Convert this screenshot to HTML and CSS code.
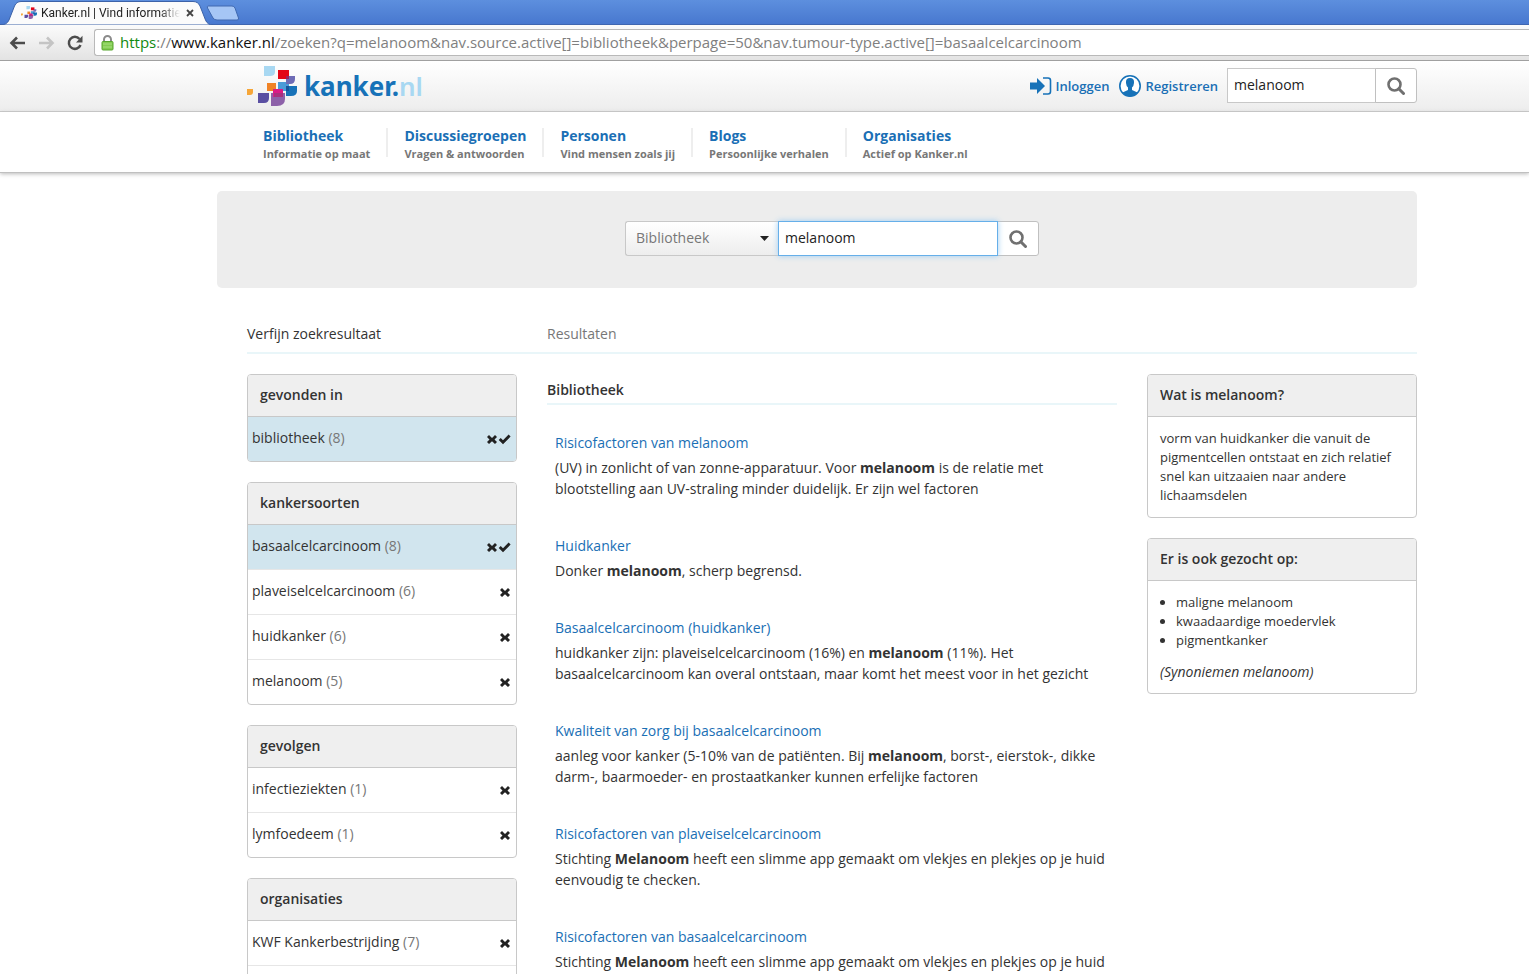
FILE: index.html
```html
<!DOCTYPE html>
<html lang="nl">
<head>
<meta charset="utf-8">
<title>Kanker.nl | Vind informatie</title>
<link rel="stylesheet" href="styles.css">
</head>
<body>
<svg class="defs" aria-hidden="true">
  <symbol id="cross" viewBox="0 0 12 12"><path d="M3 2L6 5L9 2L11 4L8.500 6.500L11 9L9 11L6 8.200L3 11L1 9L3.500 6.500L1 4Z"/></symbol>
  <symbol id="check" viewBox="0 0 13 12"><path d="M2.700 5L5 7.300L10.600 1.600L12.600 3.600L5 11.200L.7 7Z"/></symbol>
  <symbol id="search" viewBox="0 0 18 18"><circle cx="7.500" cy="7.500" r="6" fill="none" stroke="#707070" stroke-width="2.600"/><path d="M11.800 11.800L16.500 16.500" stroke="#707070" stroke-width="3" stroke-linecap="round"/></symbol>
  <symbol id="blocks" viewBox="0 0 50 40">
    <path fill="#a8d8f2" d="M17 0H28V6Q28 10 23 10H17Z"/>
    <path fill="#e30617" d="M31 4H42V13H31Z"/>
    <path fill="#f08326" d="M20 17H29V25H20Z"/>
    <path fill="#f6a638" d="M0 23H6V26Q6 29 3 29H0Z"/>
    <path fill="#5a4fa2" d="M11 27H22V32Q22 37 17 37H11Z"/>
    <path fill="#4a9bd8" d="M31 16H42V25H31Z"/>
    <path fill="#1772b8" d="M39 20H50V25Q50 30 44 30H39Z"/>
    <path fill="#6e6bb5" d="M42 10H48V13Q48 18 43 18H39V13H42Z"/>
    <path fill="#9a245f" d="M39 10H42V13H39Z"/>
    <path fill="#8d61a9" d="M24 27H38V33Q38 40 30 40H24Z"/>
    <path fill="#d91b86" d="M26 23H36V31H26Z"/>
    <path fill="#a9307e" d="M27 27H36V31H27Z"/>
    <path fill="#16559b" d="M39 20H42V25H39Z"/>
  </symbol>
</svg>

<div class="browser">
  <div class="tabs">
    <svg class="tab-shape" viewBox="0 0 245 25">
      <path d="M0 25Q7 25 9 20L14.500 6Q16.500 1.500 21 1.500H193Q198 1.500 200 6L205.500 20Q207.500 25 213 25Z" fill="#fbfbfb" stroke="#3c62a8"/>
      <path d="M208 6H232Q234 6 235 8L238.500 18Q239 20 237 20H217Q214.500 20 213 18L207.500 8Q207 6 208 6Z" fill="#a6c6f5" stroke="#4069b0"/>
    </svg>
    <div class="tab">
      <svg class="favicon"><use href="#blocks"/></svg>
      <span class="tab-title">Kanker.nl | Vind informatie</span>
      <button class="tab-close" aria-label="Sluiten"><svg width="8" height="8" viewBox="0 0 8 8"><path d="M1 1L7 7M7 1L1 7" stroke="#444" stroke-width="1.800"/></svg></button>
    </div>
  </div>
  <div class="toolbar">
    <button aria-label="Terug"><svg width="17" height="16" viewBox="0 0 17 16"><path d="M16 8H3M8 2.500L2.500 8L8 13.500" fill="none" stroke="#4c4c4c" stroke-width="2.600"/></svg></button>
    <button aria-label="Vooruit"><svg width="17" height="16" viewBox="0 0 17 16"><path d="M1 8H14M9 2.500L14.500 8L9 13.500" fill="none" stroke="#c4c4c4" stroke-width="2.600"/></svg></button>
    <button aria-label="Vernieuwen"><svg width="17" height="16" viewBox="0 0 17 16"><path d="M12.500 4A6 6 0 1 0 13.500 10" fill="none" stroke="#4c4c4c" stroke-width="2.500"/><path d="M15.500 .8V7.500H9Z" fill="#4c4c4c"/></svg></button>
    <div class="address">
      <svg width="13" height="16" viewBox="0 0 13 16"><path d="M3 7V4.500A3.500 3.500 0 0 1 10 4.500V7" fill="none" stroke="#8b8b8b" stroke-width="2"/><rect x="1" y="6.500" width="11" height="8.500" rx="1" fill="#83cc52" stroke="#57a52e"/><path d="M2 9H11M2 12H11" stroke="#a7df80"/></svg>
      <span class="url"><span class="scheme">https</span>://<span class="host">www.kanker.nl</span>/zoeken?q=melanoom&amp;nav.source.active[]=bibliotheek&amp;perpage=50&amp;nav.tumour-type.active[]=basaalcelcarcinoom</span>
    </div>
  </div>
</div>

<header class="site-header">
  <a class="logo" href="#"><svg class="logo-mark"><use href="#blocks"/></svg><span class="logo-name">kanker.<span class="logo-tld">nl</span></span></a>
  <div class="account">
    <a href="#"><svg width="22" height="18" viewBox="0 0 22 18"><path d="M0 5.500H7V1L15 9L7 17V12.500H0Z" fill="#1772b8"/><path d="M13 1H18Q20.500 1 20.500 3.500V14.500Q20.500 17 18 17H13" fill="none" stroke="#1772b8" stroke-width="1.600"/></svg>Inloggen</a>
    <a href="#"><svg width="24" height="24" viewBox="0 0 24 24"><circle cx="12" cy="12" r="10.200" fill="#fff" stroke="#1772b8" stroke-width="1.600"/><path d="M12 4Q16.500 4 16 9Q15.800 12 14 13.500V16L19.500 18.500Q16 22.500 12 22.500T4.500 18.500L10 16V13.500Q8.200 12 8 9Q7.500 4 12 4Z" fill="#1772b8"/></svg>Registreren</a>
  </div>
  <form class="search">
    <input class="top-input" type="text" value="melanoom" aria-label="Zoeken">
    <button class="search-btn" type="button" aria-label="Zoek"><svg width="18" height="18"><use href="#search"/></svg></button>
  </form>
</header>

<nav class="main-nav">
  <a href="#"><strong>Bibliotheek</strong><span>Informatie op maat</span></a>
  <a href="#"><strong>Discussiegroepen</strong><span>Vragen &amp; antwoorden</span></a>
  <a href="#"><strong>Personen</strong><span>Vind mensen zoals jij</span></a>
  <a href="#"><strong>Blogs</strong><span>Persoonlijke verhalen</span></a>
  <a href="#"><strong>Organisaties</strong><span>Actief op Kanker.nl</span></a>
</nav>

<main>
  <form class="hero search">
    <select aria-label="Bron"><option>Bibliotheek</option></select>
    <input class="hero-input" type="text" value="melanoom" aria-label="Zoekterm">
    <button class="search-btn" type="button" aria-label="Zoek"><svg width="18" height="18"><use href="#search"/></svg></button>
  </form>

  <div class="content">
    <div class="headings"><h2>Verfijn zoekresultaat</h2><h2 class="muted">Resultaten</h2></div>

    <div class="columns">
      <aside class="stack">
        <section class="panel">
          <h3>gevonden in</h3>
          <ul class="facets">
            <li class="active"><a href="#">bibliotheek <span>(8)</span></a><svg class="icon"><use href="#cross"/></svg><svg class="icon tick"><use href="#check"/></svg></li>
          </ul>
        </section>
        <section class="panel">
          <h3>kankersoorten</h3>
          <ul class="facets">
            <li class="active"><a href="#">basaalcelcarcinoom <span>(8)</span></a><svg class="icon"><use href="#cross"/></svg><svg class="icon tick"><use href="#check"/></svg></li>
            <li><a href="#">plaveiselcelcarcinoom <span>(6)</span></a><svg class="icon"><use href="#cross"/></svg></li>
            <li><a href="#">huidkanker <span>(6)</span></a><svg class="icon"><use href="#cross"/></svg></li>
            <li><a href="#">melanoom <span>(5)</span></a><svg class="icon"><use href="#cross"/></svg></li>
          </ul>
        </section>
        <section class="panel">
          <h3>gevolgen</h3>
          <ul class="facets">
            <li><a href="#">infectieziekten <span>(1)</span></a><svg class="icon"><use href="#cross"/></svg></li>
            <li><a href="#">lymfoedeem <span>(1)</span></a><svg class="icon"><use href="#cross"/></svg></li>
          </ul>
        </section>
        <section class="panel">
          <h3>organisaties</h3>
          <ul class="facets">
            <li><a href="#">KWF Kankerbestrijding <span>(7)</span></a><svg class="icon"><use href="#cross"/></svg></li>
            <li></li>
          </ul>
        </section>
      </aside>

      <section class="results">
        <h3>Bibliotheek</h3>
        <article><a href="#">Risicofactoren van melanoom</a><p>(UV) in zonlicht of van zonne-apparatuur. Voor <b>melanoom</b> is de relatie met blootstelling aan UV-straling minder duidelijk. Er zijn wel factoren</p></article>
        <article><a href="#">Huidkanker</a><p>Donker <b>melanoom</b>, scherp begrensd.</p></article>
        <article><a href="#">Basaalcelcarcinoom (huidkanker)</a><p>huidkanker zijn: plaveiselcelcarcinoom (16%) en <b>melanoom</b> (11%). Het basaalcelcarcinoom kan overal ontstaan, maar komt het meest voor in het gezicht</p></article>
        <article><a href="#">Kwaliteit van zorg bij basaalcelcarcinoom</a><p>aanleg voor kanker (5-10% van de patiënten. Bij <b>melanoom</b>, borst-, eierstok-, dikke darm-, baarmoeder- en prostaatkanker kunnen erfelijke factoren</p></article>
        <article><a href="#">Risicofactoren van plaveiselcelcarcinoom</a><p>Stichting <b>Melanoom</b> heeft een slimme app gemaakt om vlekjes en plekjes op je huid eenvoudig te checken.</p></article>
        <article><a href="#">Risicofactoren van basaalcelcarcinoom</a><p>Stichting <b>Melanoom</b> heeft een slimme app gemaakt om vlekjes en plekjes op je huid</p></article>
      </section>

      <aside class="stack">
        <section class="panel">
          <h3>Wat is melanoom?</h3>
          <div class="panel-text"><p>vorm van huidkanker die vanuit de pigmentcellen ontstaat en zich relatief snel kan uitzaaien naar andere lichaamsdelen</p></div>
        </section>
        <section class="panel">
          <h3>Er is ook gezocht op:</h3>
          <div class="panel-text">
            <ul><li>maligne melanoom</li><li>kwaadaardige moedervlek</li><li>pigmentkanker</li></ul>
            <p class="note">(Synoniemen melanoom)</p>
          </div>
        </section>
      </aside>
    </div>
  </div>
</main>
</body>
</html>
```

FILE: styles.css
```css
* { box-sizing: border-box; }
body {
  margin: 0;
  height: 100vh;
  overflow: hidden;
  display: flex;
  flex-direction: column;
  background: #fff;
  color: #333;
  font: 14px/21px "Open Sans", sans-serif;
}
h2, h3, p, ul { margin: 0; padding: 0; }
a { color: #1a6fb5; text-decoration: none; }
button { border: 0; padding: 0; background: none; display: flex; align-items: center; justify-content: center; }
svg { flex: none; }
.defs { position: absolute; width: 0; height: 0; }

.browser { flex: none; }
.tabs { position: relative; height: 25px; background: linear-gradient(#5d8fde, #4878cf); border-bottom: 1px solid #3f66b0; }
.tab-shape { position: absolute; left: 0; top: 0; width: 245px; height: 25px; }
.tab { position: relative; display: flex; align-items: center; width: 196px; height: 25px; padding-left: 21px; }
.favicon { width: 16px; height: 13px; margin-right: 4px; }
.tab-title {
  width: 139px;
  margin-right: 6px;
  overflow: hidden;
  white-space: nowrap;
  font: 12px/18px Roboto, sans-serif;
  color: #222;
  -webkit-mask-image: linear-gradient(90deg, #000 85%, transparent);
  mask-image: linear-gradient(90deg, #000 85%, transparent);
}
.toolbar { display: flex; align-items: center; gap: 12px; height: 36px; padding: 0 0 0 9px; background: linear-gradient(#fbfbfb, #e3e3e3); border-bottom: 1px solid #a0a0a0; }
.address { flex: 1; display: flex; align-items: center; gap: 6px; height: 27px; margin-left: -2px; padding-left: 6px; background: #fff; border: 1px solid #b9b9b9; border-right: 0; border-radius: 3px 0 0 3px; }
.url { padding-bottom: 2px; font: 15px/20px "Open Sans", sans-serif; color: #7f7f7f; white-space: nowrap; }
.scheme { color: #118a11; }
.host { color: #111; }

.site-header { flex: none; display: flex; align-items: center; height: 51px; padding: 0 112px 0 247px; background: linear-gradient(#fff, #ededed); border-bottom: 1px solid #c8c8c8; }
.logo { display: flex; align-items: center; gap: 7px; margin-right: auto; }
.logo-mark { width: 50px; height: 40px; }
.logo-name { font: bold 26px/36px "Noto Sans", sans-serif; color: #1772b8; }
.logo-tld { font-weight: 600; color: #a8d8f2; }
.account { display: flex; gap: 9px; margin-right: 9px; }
.account a { display: flex; align-items: center; gap: 3px; font-size: 13px; font-weight: 600; }
.search { display: flex; }
.search input { height: 35px; padding: 0 6px 2px; border: 1px solid #c8c8c8; border-radius: 0; background: #fff; font: 14px/21px "Open Sans", sans-serif; color: #222; outline: 0; }
.site-header .search { padding-bottom: 1px; }
.top-input { width: 149px; }
.search-btn { width: 42px; height: 35px; margin-left: -1px; border: 1px solid #c0c0c0; border-radius: 0 3px 3px 0; background: #fff; }

.main-nav { flex: none; display: flex; height: 61px; padding: 16px 112px 0 247px; border-bottom: 1px solid #c0c0c0; box-shadow: 0 1px 4px #bbb; }
.main-nav a { height: 29px; padding: 0 16px; border-right: 2px solid #eee; line-height: 16px; }
.main-nav a:last-child { border: 0; }
.main-nav strong, .main-nav span { display: block; white-space: nowrap; }
.main-nav strong { margin-bottom: 2px; }
.main-nav span { font-size: 11px; font-weight: 700; color: #777; }

main { flex: 1; min-height: 0; overflow: hidden; padding: 18px 112px 0 217px; }
.hero { align-items: center; justify-content: center; height: 97px; padding-left: 30px; padding-bottom: 2px; background: #ededed; border-radius: 5px; }
.hero select {
  appearance: none;
  width: 153px;
  height: 35px;
  padding: 0 10px 2px;
  border: 1px solid #c8c8c8;
  border-right: 0;
  border-radius: 3px 0 0 3px;
  background: url("data:image/svg+xml,%3Csvg xmlns='http://www.w3.org/2000/svg' width='9' height='5'%3E%3Cpath d='M0 0H9L4.500 5Z' fill='%23222'/%3E%3C/svg%3E") no-repeat right 9px center, linear-gradient(#fff, #ededed);
  font: 14px/21px "Open Sans", sans-serif;
  color: #777;
}
.search .hero-input { position: relative; width: 220px; border-color: #66afe9; box-shadow: 0 0 6px #9fcdf2; }

.content { padding-left: 30px; }
.headings, .columns { display: grid; grid-template-columns: 270px minmax(0, 1fr) 270px; column-gap: 30px; align-items: start; }
.headings { margin-top: 35px; padding-bottom: 8px; border-bottom: 2px solid #e9f6f9; }
h2 { font-size: 14px; line-height: 21px; font-weight: 400; }
.muted { color: #777; }
.columns { padding-top: 20px; }
.stack { display: grid; gap: 20px; }
.panel { border: 1px solid #c8c8c8; border-radius: 4px; overflow: hidden; }
.panel h3 { height: 42px; padding: 9px 12px; background: #efefef; border-bottom: 1px solid #c8c8c8; }
h3 { font-size: 14px; line-height: 21px; font-weight: 600; }
.facets { list-style: none; }
.facets li { display: flex; align-items: center; height: 45px; padding: 0 5px 4px 4px; border-bottom: 1px solid #e6e6e6; }
.facets li:last-child { height: 44px; border-bottom: 0; }
.facets .active { background: #d1e5ee; }
.facets a { flex: 1; color: #333; }
.facets a span { color: #777; }
.icon { width: 12px; height: 12px; margin-top: 3px; fill: #222; }
.tick { width: 13px; }

.results h3 { padding: 5px 0 3px; border-bottom: 2px solid #e9f6f9; margin-bottom: 27px; }
.results article { padding: 0 8px; margin-bottom: 36px; }
.results article a { display: block; margin-bottom: 4px; }

.panel-text { padding: 12px; font-size: 13px; line-height: 19px; }
.panel-text ul { margin-bottom: 12px; padding-left: 16px; }
.note { font-size: 14px; font-style: italic; }
```
